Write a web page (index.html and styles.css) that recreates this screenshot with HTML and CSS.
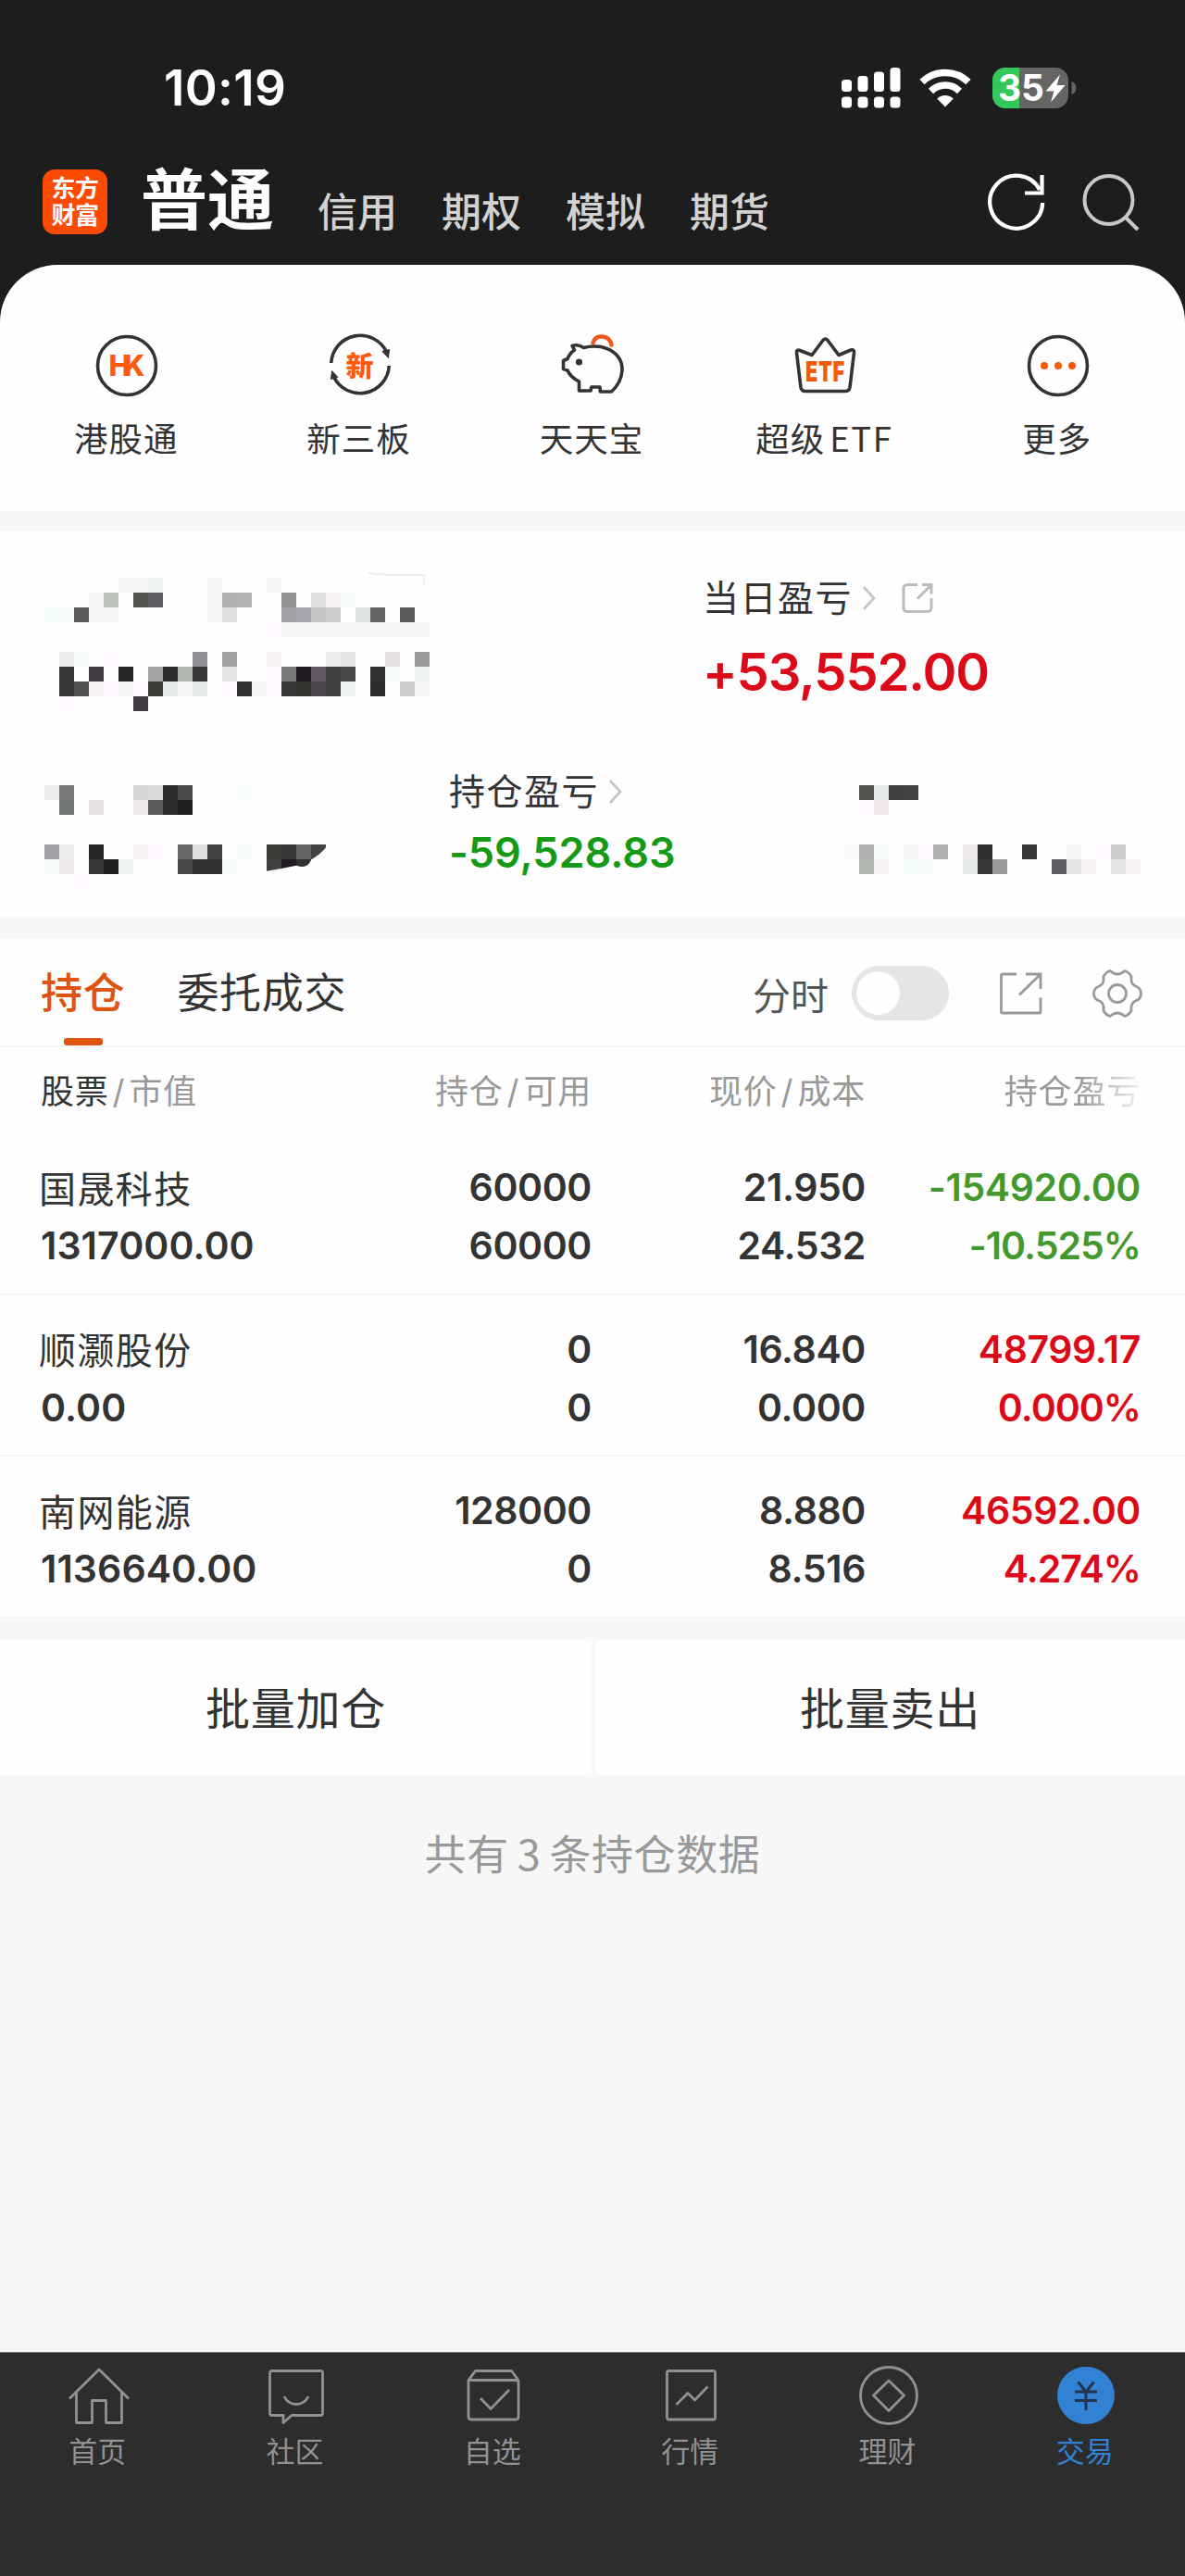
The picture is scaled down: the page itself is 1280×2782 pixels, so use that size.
FILE: index.html
```html
<!DOCTYPE html>
<html lang="zh-CN">
<head>
<meta charset="utf-8">
<title>交易</title>
<link rel="stylesheet" href="styles.css">
</head>
<body>
<div class="app">
  <div class="status">
    <span class="time">10:19</span>
    <div class="status-icons">
      <svg width="66" height="46" viewBox="0 0 66 46" fill="#fff">
        <rect x="1" y="14" width="11" height="13" rx="3.5"/><rect x="18.500" y="10" width="11" height="17" rx="3.500"/><rect x="36" y="5.500" width="11" height="21.500" rx="3.500"/><rect x="53.500" y="1" width="11" height="26" rx="3.500"/>
        <rect x="1" y="32.500" width="11" height="12" rx="3.500"/><rect x="18.500" y="32.500" width="11" height="12" rx="3.500"/><rect x="36" y="32.500" width="11" height="12" rx="3.500"/><rect x="53.500" y="32.500" width="11" height="12" rx="3.500"/>
      </svg>
      <svg class="wifi" width="58" height="44" viewBox="0 0 58 44">
        <path d="M4 15.500a36 36 0 0 1 50 0M13.500 25.500a22 22 0 0 1 31 0" fill="none" stroke="#fff" stroke-width="7.500"/>
        <path d="M29 42.500l-8.800-9a12.500 12.500 0 0 1 17.600 0z" fill="#fff"/>
      </svg>
      <svg class="battery" width="94" height="46" viewBox="0 0 94 46">
        <defs><clipPath id="charge"><rect width="29" height="46"/></clipPath></defs>
        <rect x="0" y="1" width="82" height="44" rx="14" fill="#656565"/>
        <rect x="0" y="1" width="82" height="44" rx="14" fill="#34c759" clip-path="url(#charge)"/>
        <path d="M85.500 16c3 1 5 3.500 5 7s-2 6-5 7z" fill="#656565"/>
        <text x="6" y="37" class="battery-text" textLength="50">35</text>
        <path d="M73 8.500L57.500 26.500h9l-3.500 12L78.500 20H69.500z" fill="#fff"/>
      </svg>
    </div>
  </div>

  <header class="header">
    <div class="logo"><span>东方</span><span>财富</span></div>
    <h1 class="account-type">普通</h1>
    <nav class="types"><span>信用</span><span>期权</span><span>模拟</span><span>期货</span></nav>
    <svg class="refresh" width="64" height="64" viewBox="0 0 64 64" fill="none" stroke="#fff" stroke-width="4.200">
      <path d="M60.200 33A28.500 28.500 0 1 1 57 19"/><path d="M59.500 3v19.500H41"/>
    </svg>
    <svg class="search" width="64" height="64" viewBox="0 0 64 64" fill="none" stroke="#c8c8c8" stroke-width="4">
      <circle cx="29.500" cy="30" r="26"/><path d="M48 49l13 13"/>
    </svg>
  </header>

  <section class="quick">
    <div class="quick-item">
      <svg width="72" height="72" viewBox="0 0 72 72"><circle cx="36" cy="36" r="31.500" class="ink"/><text x="36.500" y="47" text-anchor="middle" textLength="40" class="hk">HK</text></svg>
      <span>港股通</span>
    </div>
    <div class="quick-item">
      <svg width="72" height="72" viewBox="0 0 72 72"><path d="M4.700 33a31.500 31.500 0 0 1 60-11.500M67.300 36a31.500 31.500 0 0 1-60 11.500" class="ink"/><path d="M60 20.500l7.500-2-1 9z" fill="#333" stroke="#333"/><path d="M4.500 50.500l1-9 6.500 7z" fill="#333" stroke="#333"/><text x="36" y="47" text-anchor="middle" class="xin">新</text></svg>
      <span>新三板</span>
    </div>
    <div class="quick-item">
      <svg width="72" height="72" viewBox="0 0 72 72">
        <path d="M26.500 16.500C34 14.500 44 14.500 50 17c12 4 18.500 13 18 24-.500 8-5 17-11.500 23h-12l-.500-5H35l-1 4H21.500v-10C15.500 50 11 45.500 9 41l-4.500-1.500v-9L9 28.500c1.500-4 4-7 7.500-9.500L14 14.500c3-1 7-1.500 12.500 2z" class="ink" stroke-linejoin="round"/>
        <circle cx="21.500" cy="32" r="3.600" fill="#333"/><path d="M36.500 11.500C38 5.500 42 4 47 4.500s8.500 4 9.500 9" fill="none" stroke="#f1591c" stroke-width="4.500" stroke-linecap="round"/>
      </svg>
      <span>天天宝</span>
    </div>
    <div class="quick-item">
      <svg width="72" height="72" viewBox="0 0 72 72">
        <path d="M5.500 22c-.3-2.500 1-3.500 3.500-2.500l13 5L34 8.500q2.500-3 5 0L51 24.500l13-5.500c2.500-.8 3.800.3 3.500 3L63 59.500q-.700 4-5 4H15q-4.300 0-5-4z" class="ink" stroke-linejoin="round"/>
        <text x="15" y="52.500" textLength="43" lengthAdjust="spacingAndGlyphs" class="etf">ETF</text>
      </svg>
      <span class="etf-label">超级<i>ETF</i></span>
    </div>
    <div class="quick-item">
      <svg width="72" height="72" viewBox="0 0 72 72"><circle cx="36" cy="36" r="31.500" class="ink"/><g fill="#f35a0a"><circle cx="21" cy="36" r="4"/><circle cx="36" cy="36" r="4"/><circle cx="51" cy="36" r="4"/></g></svg>
      <span>更多</span>
    </div>
  </section>

  <section class="account">
    <div class="account-top">
      <svg id="mask-total" class="mask" width="432" height="144" viewBox="3 39 27 9"><path d="M24.900 38.700q2.500.200 3.700.100v.700" fill="none" stroke="#eee" stroke-width=".13"/></svg>
      <div class="daily">
        <div class="label">当日盈亏
          <svg class="chev" width="18" height="28" viewBox="0 0 18 28"><path d="M3 2l11 12L3 26"/></svg>
          <svg class="share-s" width="34" height="34" viewBox="0 0 34 34"><path d="M17 2.500H6a4 4 0 0 0-4 4v21a4 4 0 0 0 4 4h22a4 4 0 0 0 4-4V17M22 2.500h10v10M32 2.500L17 17.500"/></svg>
        </div>
        <div class="daily-value">+53,552.00</div>
      </div>
    </div>
    <div class="account-bottom">
      <svg id="mask-assets" class="mask" width="320" height="128" viewBox="3 52 20 8"></svg>
      <div class="holding">
        <div class="label">持仓盈亏
          <svg class="chev" width="18" height="28" viewBox="0 0 18 28"><path d="M3 2l11 12L3 26"/></svg>
        </div>
        <div class="holding-value">-59,528.83</div>
      </div>
      <svg id="mask-cash" class="mask" width="320" height="128" viewBox="57 52 20 8"></svg>
    </div>
  </section>

  <section class="positions">
    <div class="tabs">
      <span class="tab active">持仓</span>
      <span class="tab">委托成交</span>
      <span class="chart-label">分时</span>
      <span class="toggle"></span>
      <svg class="share" width="48" height="48" viewBox="0 0 48 48"><path d="M19 3H3.500q-1 0-1 1v40q0 1 1 1H44q1 0 1-1V28.500M29 3h16v16M45 3L22 25.500"/></svg>
      <svg class="gear" width="56" height="56" viewBox="0 0 56 56"><path d="M13 9.500Q16 4.500 20 3.500q8 7 16 0 4 1 7 6-1 8 4.500 10.500 6 2 6 8t-6 8Q42 38.500 43 46.500q-3 5-7 6-8-7-16 0-4-1-7-6 1-8-4.500-10.500-6-2-6-8t6-8Q14 17.500 13 9.500z"/><circle cx="28" cy="28" r="9.500"/></svg>
    </div>
    <div class="row head">
      <span><b>股票</b><i>/</i>市值</span><span>持仓<i>/</i>可用</span><span>现价<i>/</i>成本</span><span class="fade">持仓盈亏</span>
    </div>
    <div class="row">
      <div><span class="name">国晟科技</span><span>1317000.00</span></div>
      <div><span>60000</span><span>60000</span></div>
      <div><span>21.950</span><span>24.532</span></div>
      <div class="down"><span>-154920.00</span><span class="pct">-10.525%</span></div>
    </div>
    <div class="row">
      <div><span class="name">顺灏股份</span><span>0.00</span></div>
      <div><span>0</span><span>0</span></div>
      <div><span>16.840</span><span>0.000</span></div>
      <div class="up"><span>48799.17</span><span class="pct">0.000%</span></div>
    </div>
    <div class="row">
      <div><span class="name">南网能源</span><span>1136640.00</span></div>
      <div><span>128000</span><span>0</span></div>
      <div><span>8.880</span><span>8.516</span></div>
      <div class="up"><span>46592.00</span><span class="pct">4.274%</span></div>
    </div>
  </section>

  <div class="actions"><span>批量加仓</span><span>批量卖出</span></div>
  <p class="summary">共有<i>3</i>条持仓数据</p>

  <nav class="tabbar">
    <div class="tabbar-item"><svg width="68" height="68" viewBox="0 0 68 68"><path d="M2 37.500L34 6l32 31.500M9.500 31v32.500h17V39.500h15v24h17V31"/></svg><span>首页</span></div>
    <div class="tabbar-item"><svg width="68" height="68" viewBox="0 0 68 68"><path d="M7.500 7.500h53q2 0 2 2v44q0 2-2 2H29l-9 8v-8H7.500q-2 0-2-2v-44q0-2 2-2zM21 35q4 8.500 13 8.500T47 35"/></svg><span>社区</span></div>
    <div class="tabbar-item"><svg width="68" height="68" viewBox="0 0 68 68"><path d="M7 17.500L14.500 7.500h39L61 17.500V57q0 3-3 3H10q-3 0-3-3zM7 17.500h54M20 37l11 11.500L51 28"/></svg><span>自选</span></div>
    <div class="tabbar-item"><svg width="68" height="68" viewBox="0 0 68 68"><rect x="7.500" y="7.500" width="52" height="52.500" rx="2"/><path d="M17.500 44L30 31.500l7.500 7.500L51.500 24.500"/></svg><span>行情</span></div>
    <div class="tabbar-item"><svg width="68" height="68" viewBox="0 0 68 68"><circle cx="34" cy="34" r="30.500"/><path d="M34 18l16.500 16L34 50.500 17.500 34z"/></svg><span>理财</span></div>
    <div class="tabbar-item current"><svg width="68" height="68" viewBox="0 0 68 68"><circle cx="34" cy="34" r="31" class="coin"/><path d="M25.500 19.500L34 30l8.500-10.500M34 30v20M22 30h24M22 39.500h24" class="yen"/></svg><span>交易</span></div>
  </nav>
</div>
<script src="mask.js"></script>
</body>
</html>
```
FILE: styles.css
```css
* { box-sizing: border-box; }
body { margin: 0; background: #1d1d1d; }
i { font-style: normal; }
b { font-weight: 400; }
.app { width: 1280px; height: 2782px; display: flex; flex-direction: column; overflow: hidden; font-family: Inter, "Noto Sans CJK SC", sans-serif; color: #333; }

.status { height: 190px; flex: none; display: flex; align-items: center; justify-content: space-between; padding: 0 114px 0 177px; }
.time { color: #fff; font-size: 53px; font-weight: 600; letter-spacing: .3px; line-height: 60px; }
.status-icons { display: flex; align-items: center; }
.wifi { margin-left: 18px; }
.battery { margin-left: 22px; }
.battery-text { font: 700 39px Inter, sans-serif; fill: #fff; }

.header { height: 96px; flex: none; display: flex; align-items: flex-start; padding-left: 46px; }
.logo { margin-top: -7px; width: 70px; height: 70px; border-radius: 13px; background: #fb4b02; padding-top: 6px; display: flex; flex-direction: column; align-items: center; font-size: 26px; line-height: 29px; font-weight: 700; letter-spacing: -.5px; color: #fff; }
.account-type { margin: -14px 0 0 36px; width: 145px; font-size: 72px; line-height: 80px; font-weight: 700; color: #fff; }
.types { margin: 14px 0 0 46px; width: 723px; display: flex; gap: 48px; font-size: 43px; line-height: 50px; font-weight: 500; color: #d2d2d2; }
.refresh { margin-top: -4px; }
.search { margin: -4px 0 0 38px; }

.quick { height: 266px; flex: none; background: #fefefe; border-radius: 62px 62px 0 0; display: grid; grid-template-columns: repeat(5, 1fr); padding: 73px 11.5px 0; }
.quick-item { display: flex; flex-direction: column; align-items: center; gap: 22px; font-size: 36.5px; line-height: 44px; letter-spacing: 1px; white-space: nowrap; }
.quick-item span { margin-right: 2px; }
.quick-item svg { overflow: visible; }
.etf-label i { margin-left: 5px; font-family: "Noto Sans CJK SC", sans-serif; letter-spacing: 1.6px; line-height: 0; }
.ink { fill: none; stroke: #333; stroke-width: 3.6; }
.hk { font: 800 31px Inter, sans-serif; fill: #ff5a0c; }
.xin { font: 900 30px "Noto Sans CJK SC", sans-serif; fill: #ff5a0c; }
.etf { font: 900 30px Inter, sans-serif; fill: #f35a0a; }

.account { margin-top: 23px; height: 416px; flex: none; background: #fefefe; padding: 49px 48px 0; }
.quick + .account { box-shadow: 0 -23px #f7f7f7, 0 24px #f7f7f7; }
.account-top { display: flex; height: 208px; }
.mask { display: block; overflow: visible; shape-rendering: crispEdges; }
.daily { margin-left: 279px; }
.label { display: flex; align-items: center; font-size: 39px; letter-spacing: 1.5px; line-height: 44px; }
.chev { margin-left: 9px; fill: none; stroke: #c4c4c4; stroke-width: 2.6; }
.share-s { margin-left: 26px; fill: none; stroke: #bbb; stroke-width: 3; }
.daily-value { margin-top: 28px; font-size: 56px; line-height: 60px; font-weight: 600; color: #dc0a18; letter-spacing: -1.1px; white-space: nowrap; }
.account-bottom { display: flex; }
.holding { width: 427px; margin-left: 117px; padding-top: 1px; }
.holding-value { margin-top: 19px; font-size: 45px; line-height: 50px; font-weight: 600; color: #159a16; letter-spacing: -.1px; }

.positions { margin-top: 23px; flex: none; background: #fefefe; height: 733px; }
.tabs { height: 117px; border-bottom: 2px solid #f3f3f3; display: flex; align-items: center; padding: 2px 45px 0 44px; }
.tab { position: relative; font-size: 45px; line-height: 60px; letter-spacing: .7px; margin-right: 56px; padding-top: 1px; }
.active { color: #df5412; font-weight: 500; }
.active::after { content: ""; position: absolute; left: 25px; top: 79px; width: 42px; height: 8px; border-radius: 3px; background: #df5412; }
.chart-label { margin-left: auto; font-size: 41px; color: #555; }
.toggle { margin-left: 25px; width: 105px; height: 59px; border-radius: 30px; background: #e5e5e5; padding: 6px 5px; }
.toggle::before { content: ""; display: block; width: 47px; height: 47px; border-radius: 50%; background: #fefefe; }
.share, .gear { fill: none; stroke: #999; stroke-width: 2.8; }
.share { margin-left: 54px; }
.gear { margin-left: 52px; }
.row { height: 174.5px; border-bottom: 2px solid #f5f5f5; display: grid; grid-template-columns: 291px 304px 296px 297px; padding: 27px 0 0 44px; font-size: 41px; line-height: 63px; font-weight: 600; letter-spacing: -.4px; text-align: right; }
.row > :first-child { text-align: left; letter-spacing: .1px; }
.row div span { display: block; }
.row .name { font-size: 40px; font-weight: 400; letter-spacing: 1.4px; padding-left: 0; margin-left: -2px; position: relative; top: 1.5px; }
.row .pct { letter-spacing: -1px; }
.row.head { height: 93px; border: 0; padding-top: 17px; font-size: 36px; font-weight: 400; letter-spacing: .8px; color: #999; }
.row.head > :first-child { letter-spacing: .8px; }
.head b { color: #333; }
.head i { margin: 0 4px; }
.fade { -webkit-mask-image: linear-gradient(90deg, #000 78%, transparent 103%); mask-image: linear-gradient(90deg, #000 78%, transparent 103%); }
.up { color: #dc0a18; }
.down { color: #43992d; }

.actions { flex: none; height: 170px; border-top: 24px solid #f7f7f7; background: #fefefe; display: grid; grid-template-columns: 639px 641px; font-size: 48px; line-height: 146px; letter-spacing: .8px; text-align: center; }
.actions span { padding-top: 2px; }
.actions span:last-child { border-left: 4px solid #f7f7f7; }
.summary { margin: 0; flex: 1; background: #f7f7f7; padding-top: 57px; font-size: 45px; line-height: 60px; color: #999; text-align: center; letter-spacing: .6px; }
.summary i { margin: 0 9px; font-family: "Noto Sans CJK SC", sans-serif; line-height: 0; }

.tabbar { flex: none; height: 242px; background: #2d2d2e; border-top: 1px solid #777; display: grid; grid-template-columns: repeat(6, 1fr); }
.tabbar-item { display: flex; flex-direction: column; align-items: center; padding-top: 12px; gap: 7px; font-size: 31px; line-height: 40px; color: #919191; }
.tabbar-item span { margin-right: 3px; }
.tabbar-item svg { fill: none; stroke: #919191; stroke-width: 2.8; stroke-linejoin: round; }
.tabbar-item.current { color: #3181d4; }
.tabbar-item .coin { fill: #3181d4; stroke: none; }
.tabbar-item .yen { stroke: #26344a; stroke-width: 3; }
```
FILE: mask.js
```js
// Pixelated privacy masks. Each run is [row, column, ...colours of consecutive 16px cells].
const masks = {
  'mask-total': [
    [39,8,'f6f6f6','f6f6f6','edf3ef'],[39,14,'f6f6f6'],[39,18,'f6f6f6'],
    [40,6,'f6f6f6','bbc2ba'],[40,9,'50534e','625f64'],[40,14,'f6f6f6','b0aeb1','b2b2b2'],[40,19,'909390'],[40,21,'dedede','f7f1f5','f5fbf7'],
    [41,3,'f5fbf7','f5fbf7','595b58','f6f6f6','f6f6f6'],[41,14,'f6f6f6','dedede'],[41,19,'a29fa4','a9a7ab','c5c5c5','cdcdcd','fff','dce2dd','626462'],[41,27,'595b58'],
    [42,18,'fffaff','f6f6f6','f6f6f6','f6f6f6','f6f6f6','f6f6f6','f6f6f6','f6f6f6','f6f6f6','f6f6f6','f6f6f6'],
    [44,4,'eeeeee','f5fbf7'],[44,7,'fffaff'],[44,13,'929094'],[44,15,'a2a0a3'],[44,18,'f7f1f5'],[44,22,'eeeeee','e5e5e5'],[44,26,'e5e0e4'],[44,28,'999c98'],
    [45,4,'373737','fff','423a42'],[45,8,'262626'],[45,10,'a3a3a3','2a2c29','b2b8b1','373737'],[45,15,'e5e5e5'],[45,18,'fffaff','7b797c','211b21','625a62','404040','484848'],[45,25,'30322f','f5fbf7'],[45,28,'edf3ef'],
    [46,4,'373737','505050','f7f1f5','fffaff','f6f6f6','fffaff','3a3c38','e4eae5','f6f6f6','e4eae5'],[46,15,'fffaff','30322f','f6f6f6','fffaff','373737','31342f','494449','404040','edf3ef'],[46,25,'2a2c29'],[46,27,'cdcdcd','f6f6f6'],
    [47,4,'fffaff'],[47,9,'423a42']
  ],
  'mask-assets': [
    [53,3,'eeeeee','7b797c'],[53,9,'d5d5d5','dcd9dd','2a2c29','484b47'],[53,16,'f8fdf9'],
    [54,4,'717571'],[54,6,'e8e2e6'],[54,9,'efe9ee','595b58','2a2c29','202020'],
    [57,3,'a29fa4','eeeeee'],[57,6,'262626'],[57,9,'f7f1f5','fffaff'],[57,12,'6a686b','dedede','424441'],[57,16,'f5fbf7'],[57,18,'3a3c38','373537','626462','424441'],
    [58,3,'f5fbf7','efe9ee'],[58,6,'373737','202020','edf3ef'],[58,12,'484848','30322f','30322f','f5fbf7'],[58,18,'404040','211b21','30322f'],
    [59,5,'fffaff']
  ],
  'mask-cash': [
    [53,58,'50534e','e4eae5','404040','424441'],[54,58,'fffaff','efe9ee'],
    [57,57,'f8f8f8','b0aeb1','f5fbf7'],[57,61,'f6f6f6','fffaff','b0aeb1'],[57,65,'efe9ee','303030'],[57,69,'373737'],[57,72,'f6f6f6'],[57,74,'fffaff','cdcdcd'],
    [58,58,'b2b8b1','f7f1f5'],[58,61,'f5fbf7','f6fbf7'],[58,65,'e4eae5','373737','999c98'],[58,71,'625f64','e5e5e5','f7f1f5'],[58,75,'e5e5e5','f7f1f5']
  ]
};
const NS = 'http://www.w3.org/2000/svg';
for (const [id, runs] of Object.entries(masks)) {
  const svg = document.getElementById(id);
  for (const [row, col, ...colours] of runs) {
    colours.forEach((c, i) => {
      const r = document.createElementNS(NS, 'rect');
      r.setAttribute('x', col + i);
      r.setAttribute('y', row);
      r.setAttribute('width', 1);
      r.setAttribute('height', 1);
      r.setAttribute('fill', '#' + c);
      svg.append(r);
    });
  }
}
// The stroke of the last masked figure tapers off along its lower edge.
const cut = document.createElementNS(NS, 'path');
cut.setAttribute('d', 'M18 58.800L19 58.630 20 58.420Q20.600 58.620 20.850 58.300L21.050 58Q21.700 57.600 22 57.200V59.200H18z');
cut.setAttribute('fill', '#fefefe');
cut.style.shapeRendering = 'auto';
document.getElementById('mask-assets').append(cut);
```
